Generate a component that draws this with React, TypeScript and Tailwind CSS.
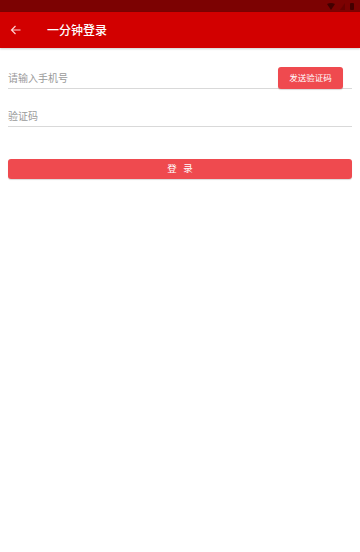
import React from "react";

export default function App() {
  return (
    <div
      className="w-[360px] h-[552px] bg-white overflow-hidden"
      style={{ fontFamily: '"Noto Sans CJK SC", "Noto Sans", sans-serif' }}
    >
      <div className="h-[12px] bg-[#7c0202] flex items-center justify-end pr-[6px] gap-[5px]">
        <svg width="8" height="7" viewBox="0 0 8 7">
          <path d="M0 1 Q4 -1 8 1 L4 7 Z" fill="#2a0000" opacity="0.7" />
        </svg>
        <svg width="5" height="7" viewBox="0 0 5 7">
          <path d="M5 0 L5 7 L0 7 Z" fill="#4a0000" opacity="0.4" />
        </svg>
        <div className="w-[4px] h-[7px] bg-[#2a0000] opacity-70 rounded-[1px]" />
      </div>
      <div className="h-[36px] bg-[#d20000] flex items-center shadow-[0_1px_2px_rgba(0,0,0,0.2)]">
        <svg className="ml-[10px]" width="11" height="10" viewBox="0 0 11 10">
          <path d="M10.5 5 H1.5 M5.5 1 L1.5 5 L5.5 9" stroke="#ffd0d0" strokeWidth="1.2" fill="none" />
        </svg>
        <span className="ml-[26px] text-white text-[12px] font-medium leading-none">一分钟登录</span>
      </div>
      <div className="px-[8px]">
        <div className="mt-[19px] h-[22px] flex items-center justify-between border-b border-[#d9d9d9]">
          <span className="text-[#9a9a9a] text-[10px] leading-none">请输入手机号</span>
          <button className="mr-[9px] w-[65px] h-[22px] bg-[#ef4a4f] text-white text-[8.5px] rounded-[3px] shadow-[0_1px_1px_rgba(0,0,0,0.15)] flex items-center justify-center leading-none">
            发送验证码
          </button>
        </div>
        <div className="mt-[16px] h-[22px] flex items-center border-b border-[#d9d9d9]">
          <span className="text-[#9a9a9a] text-[10px] leading-none">验证码</span>
        </div>
        <button className="mt-[32px] w-[344px] h-[20px] bg-[#ef4a4f] text-white text-[9.5px] rounded-[3px] shadow-[0_1px_1px_rgba(0,0,0,0.15)] flex items-center justify-center leading-none">
          登&nbsp;&nbsp;&nbsp;录
        </button>
      </div>
    </div>
  );
}
